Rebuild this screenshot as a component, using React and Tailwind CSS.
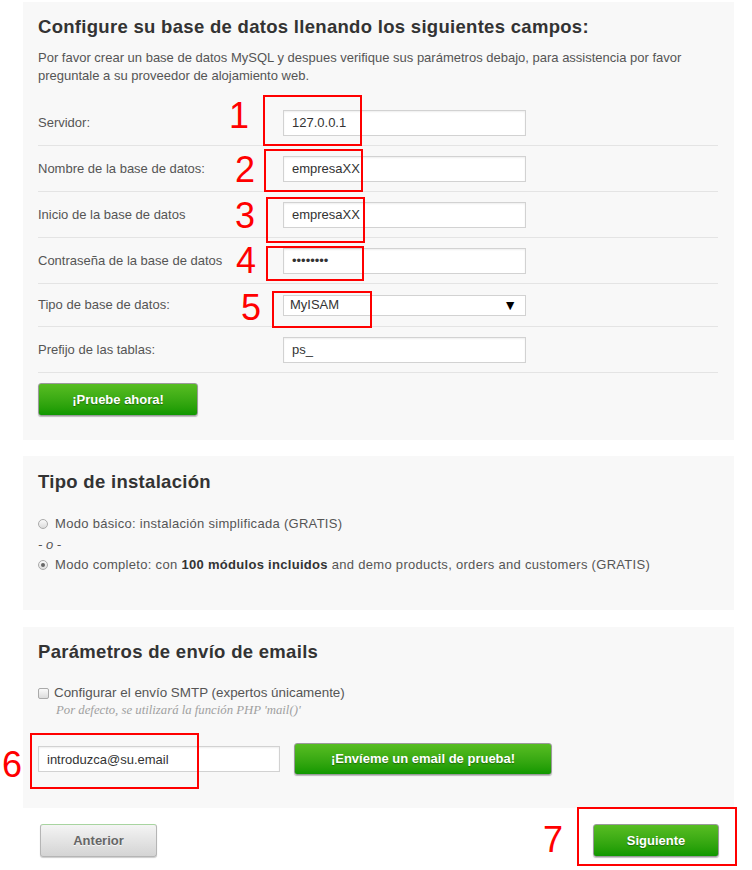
import React from "react";

const font = { fontFamily: '"Liberation Sans", Arial, sans-serif' };

function Row({ label, children, h = "h-[46px]" }) {
  return (
    <div className={`flex items-center ${h} border-b border-[#e4e4e4]`}>
      <div className="w-[245px] text-[13px] text-[#555]">{label}</div>
      {children}
    </div>
  );
}

function TextInput({ value, type = "text", w = "w-[243px]" }) {
  return (
    <input
      type={type}
      defaultValue={value}
      className={`${w} h-[26px] border border-[#d2d2d2] bg-white pl-[8px] text-[13px] text-[#333] shadow-[inset_0_1px_2px_rgba(0,0,0,0.07)] outline-none`}
      style={font}
    />
  );
}

function GreenButton({ children, w }) {
  return (
    <button
      className={`${w} rounded-[3px] border border-[#9a9a9a] bg-gradient-to-b from-[#57bd22] to-[#0e9800] text-[13px] font-bold text-white shadow-[0_1px_1px_rgba(0,0,0,0.25)] [text-shadow:0_1px_1px_rgba(0,0,0,0.35)]`}
      style={font}
    >
      {children}
    </button>
  );
}

function Radio({ checked }) {
  return (
    <span className="inline-flex h-[10px] w-[10px] shrink-0 items-center justify-center rounded-full border border-[#aaa] bg-gradient-to-b from-[#fafafa] to-[#dcdcdc]">
      {checked && <span className="h-[4px] w-[4px] rounded-full bg-[#666]" />}
    </span>
  );
}

function Box({ className }) {
  return <div className={`absolute border-2 border-[#ff0000] ${className}`} />;
}

function Num({ n, className }) {
  return (
    <div
      className={`absolute text-[36px] leading-none text-[#ff0000] ${className}`}
      style={font}
    >
      {n}
    </div>
  );
}

export default function App() {
  return (
    <div className="relative h-[870px] w-[752px] bg-white pl-[23px] pt-[2px]" style={font}>
      {/* Panel 1 */}
      <div className="w-[711px] bg-[#f8f8f8] pb-[24px] pl-[15px] pr-[16px] pt-[13px]">
        <h2 className="text-[18.5px] font-bold leading-[24px] tracking-[0.3px] text-[#333]">
          Configure su base de datos llenando los siguientes campos:
        </h2>
        <p className="mt-[10px] text-[13px] leading-[18px] text-[#555]">
          Por favor crear un base de datos MySQL y despues verifique sus parámetros debajo, para assistencia por favor
          <br />
          preguntale a su proveedor de alojamiento web.
        </p>
        <div className="mt-[15px]">
          <Row label="Servidor:">
            <TextInput value="127.0.0.1" />
          </Row>
          <Row label="Nombre de la base de datos:">
            <TextInput value="empresaXX" />
          </Row>
          <Row label="Inicio de la base de datos">
            <TextInput value="empresaXX" />
          </Row>
          <Row label="Contraseña de la base de datos">
            <TextInput value="12345678" type="password" />
          </Row>
          <Row label="Tipo de base de datos:" h="h-[43px]">
            <div className="flex h-[21px] w-[243px] items-center justify-between border border-[#d2d2d2] bg-white pl-[6px] pr-[8px] text-[13px] text-[#333]">
              <span>MyISAM</span>
              <span className="text-[14px] leading-none text-black">▼</span>
            </div>
          </Row>
          <Row label="Prefijo de las tablas:">
            <TextInput value="ps_" />
          </Row>
        </div>
        <div className="mt-[10px]">
          <GreenButton w="w-[160px] h-[33px]">¡Pruebe ahora!</GreenButton>
        </div>
      </div>

      {/* Panel 2 */}
      <div className="mt-[16px] h-[154px] w-[711px] bg-[#f8f8f8] pl-[15px] pt-[14px]">
        <h2 className="text-[18.5px] font-bold leading-[24px] tracking-[0.3px] text-[#333]">Tipo de instalación</h2>
        <div className="mt-[20px] flex items-center gap-[7px] text-[13px] leading-[20px] tracking-[0.3px] text-[#555]">
          <Radio />
          <span>Modo básico: instalación simplificada (GRATIS)</span>
        </div>
        <div className="text-[13px] italic leading-[21px] text-[#555]">- o -</div>
        <div className="flex items-center gap-[7px] text-[13px] leading-[20px] tracking-[0.3px] text-[#555]">
          <Radio checked />
          <span>
            Modo completo: con <b className="text-[#333]">100 módulos incluidos</b> and demo products, orders and customers (GRATIS)
          </span>
        </div>
      </div>

      {/* Panel 3 */}
      <div className="mt-[17px] h-[181px] w-[711px] bg-[#f8f8f8] pl-[15px] pt-[13px]">
        <h2 className="text-[18.5px] font-bold leading-[24px] tracking-[0.3px] text-[#333]">Parámetros de envío de emails</h2>
        <div className="mt-[20px] flex items-center gap-[5px] text-[13.4px] leading-[18px] text-[#555]">
          <span className="h-[11px] w-[11px] shrink-0 rounded-[2px] border border-[#aaa] bg-gradient-to-b from-[#fafafa] to-[#dcdcdc]" />
          <span>Configurar el envío SMTP (expertos únicamente)</span>
        </div>
        <div
          className="pl-[18px] text-[12.75px] italic leading-[16px] text-[#a0a0a0]"
          style={{ fontFamily: '"Liberation Serif", "Times New Roman", serif' }}
        >
          Por defecto, se utilizará la función PHP 'mail()'
        </div>
        <div className="mt-[25px] flex items-center gap-[14px]">
          <TextInput value="introduzca@su.email" w="w-[242px]" />
          <GreenButton w="w-[258px] h-[32px]">¡Envíeme un email de prueba!</GreenButton>
        </div>
      </div>

      {/* Bottom buttons */}
      <div className="mt-[16px] flex w-[711px] items-center justify-between pl-[17px] pr-[15px]">
        <button
          className="h-[33px] w-[117px] rounded-[3px] border border-[#b5b5b5] border-t-[#a8d4a0] bg-gradient-to-b from-[#f4f4f4] to-[#d4d4d4] text-[13px] font-bold text-[#666] shadow-[0_1px_1px_rgba(0,0,0,0.2)] [text-shadow:0_1px_0_rgba(255,255,255,0.8)]"
          style={font}
        >
          Anterior
        </button>
        <GreenButton w="w-[126px] h-[33px]">Siguiente</GreenButton>
      </div>

      {/* Annotations */}
      <Box className="left-[263px] top-[95px] h-[51px] w-[99px]" />
      <Box className="left-[264px] top-[149px] h-[43px] w-[99px]" />
      <Box className="left-[266px] top-[197px] h-[46px] w-[99px]" />
      <Box className="left-[266px] top-[246px] h-[35px] w-[98px]" />
      <Box className="left-[272px] top-[291px] h-[37px] w-[100px]" />
      <Box className="left-[30px] top-[733px] h-[56px] w-[169px]" />
      <Box className="left-[577px] top-[807px] h-[59px] w-[160px]" />
      <Num n="1" className="left-[229px] top-[98px]" />
      <Num n="2" className="left-[235px] top-[152px]" />
      <Num n="3" className="left-[235px] top-[198px]" />
      <Num n="4" className="left-[236px] top-[243px]" />
      <Num n="5" className="left-[241px] top-[290px]" />
      <Num n="6" className="left-[2px] top-[747px]" />
      <Num n="7" className="left-[543px] top-[822px]" />
    </div>
  );
}
